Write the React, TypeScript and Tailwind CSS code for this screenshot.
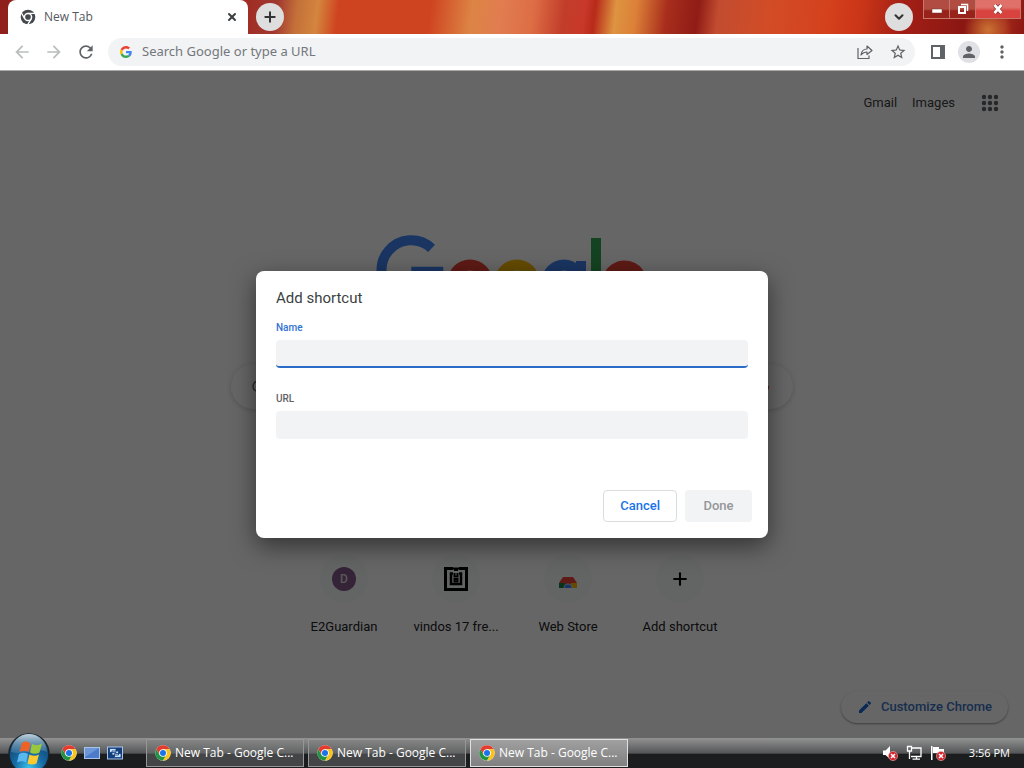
import { ChevronDown, Plus, Search, X } from "lucide-react";
import { MdArrowBack, MdArrowForward, MdEdit, MdMoreVert, MdPerson, MdRefresh, MdStarBorder } from "react-icons/md";

const taskWindows = [
  { title: "New Tab - Google C...", active: false },
  { title: "New Tab - Google C...", active: false },
  { title: "New Tab - Google C...", active: true },
];

function ChromeIcon({ className }: { className: string }) {
  return (
    <svg viewBox="0 0 48 48" className={className} aria-hidden="true">
      <circle cx="24" cy="24" r="23" fill="#fff" />
      <path d="M4.080 12.500A23 23 0 0 1 43.920 12.500H24L14 29.750Z" fill="#e33b2e" />
      <path d="M4.080 12.500A23 23 0 0 0 24 47L34 29.750H14Z" fill="#229342" />
      <path d="M43.920 12.500A23 23 0 0 1 24 47L34 29.750 24 12.500Z" fill="#fcc31e" />
      <circle cx="24" cy="24" r="11.500" fill="#fff" />
      <circle cx="24" cy="24" r="9" fill="#1a73e8" />
    </svg>
  );
}

function ChromeMono({ className }: { className: string }) {
  return (
    <svg viewBox="0 0 48 48" className={className} aria-hidden="true">
      <circle cx="24" cy="24" r="22" fill="#45494d" />
      <path d="M24 13H46M14.500 29.500 3.500 10.500M33.500 29.500 22.500 48.500" stroke="#fff" strokeWidth="4" />
      <circle cx="24" cy="24" r="13" fill="#fff" />
      <circle cx="24" cy="24" r="8.500" fill="#45494d" />
    </svg>
  );
}

function GoogleMark({ className }: { className: string }) {
  return (
    <svg viewBox="0 0 48 48" className={className} aria-hidden="true">
      <path fill="#ea4335" d="M24 9.500c3.540 0 6.710 1.220 9.210 3.600l6.850-6.850C35.900 2.380 30.470 0 24 0 14.620 0 6.510 5.380 2.560 13.220l7.980 6.190C12.430 13.720 17.740 9.500 24 9.500z" />
      <path fill="#4285f4" d="M46.980 24.550c0-1.570-.15-3.090-.38-4.550H24v9.020h12.940c-.58 2.960-2.260 5.480-4.780 7.180l7.730 6c4.510-4.180 7.090-10.360 7.090-17.650z" />
      <path fill="#fbbc05" d="M10.530 28.590c-.48-1.450-.76-2.990-.76-4.590s.27-3.140.76-4.590l-7.980-6.190C.92 16.460 0 20.120 0 24s.92 7.540 2.560 10.780l7.970-6.190z" />
      <path fill="#34a853" d="M24 48c6.480 0 11.930-2.130 15.890-5.810l-7.730-6c-2.150 1.450-4.920 2.300-8.160 2.300-6.260 0-11.570-4.220-13.470-9.910l-7.980 6.190C6.510 42.620 14.620 48 24 48z" />
    </svg>
  );
}

function GoogleLogo() {
  return (
    <svg viewBox="0 0 272 92" className="h-[92px] w-[272px]" role="img" aria-label="Google" fill="none" strokeWidth="10">
      <path d="M55.600 13.300A29.700 29.700 0 1 0 60.100 51.200Q62.500 45 62.300 36.700H35.300" stroke="#4285f4" />
      <circle cx="94" cy="47" r="17" stroke="#ea4335" strokeWidth="11" />
      <circle cx="141" cy="47" r="17" stroke="#fbbc05" strokeWidth="11" />
      <path d="M205 26V66a17 17 0 0 1-33 6" stroke="#4285f4" />
      <circle cx="188" cy="47" r="17" stroke="#4285f4" strokeWidth="11" />
      <path d="M220 3V68" stroke="#34a853" />
      <path d="M233 54 264 41A17 17 0 1 0 263 57" stroke="#ea4335" strokeWidth="11" />
    </svg>
  );
}

function TabStrip() {
  return (
    <header className="flex h-[34px] bg-[radial-gradient(circle_at_988px_30px,#d8883acc_0,transparent_24px),linear-gradient(97deg,#8e1f1a_0%,#a02c24_24%,#a0382f_27%,#c4703a_29%,#d4853e_31%,#cf4420_33%,#cf4420_42%,#dc8445_46%,#e17c50_49%,#dd6d45_52%,#c23d2a_55%,#c9382a_57%,#b82a1a_58%,#dd9440_60%,#dc8038_62%,#a82d1c_65%,#8f1c16_68%,#c24c30_70%,#d24c26_75%,#d4401c_81%,#c93517_84%,#a21f16_88%,#8b1712_94%,#a2281a_98%,#8b1712_100%)]">
      <div className="ml-2 flex w-60 items-center rounded-t-lg bg-white pr-2 pl-3">
        <ChromeMono className="size-4" />
        <span className="ml-2 flex-1 font-['Open_Sans',sans-serif] text-xs text-[#54585c]">New Tab</span>
        <button aria-label="Close tab" className="grid size-4 place-items-center text-[#3c4043]">
          <X className="size-3" strokeWidth={4} />
        </button>
      </div>
      <button aria-label="New tab" className="mt-[3px] ml-2 grid size-7 place-items-center rounded-full bg-[#dedede] text-[#333]">
        <Plus className="size-4" strokeWidth={3} />
      </button>
      <div className="flex-1" />
      <button aria-label="Search tabs" className="mt-[3px] mr-2.5 grid size-7 place-items-center rounded-full bg-[#dedede] text-[#333]">
        <ChevronDown className="size-3.5" strokeWidth={3.5} />
      </button>
      <div className="mr-[3px] flex h-[19px] gap-px border border-t-0 border-[#c9776a] bg-[#c9776a]">
        <button aria-label="Minimize" className="grid w-[25px] place-items-center bg-linear-to-b from-[#b04c42] from-50% to-[#98231b] to-60%">
          <svg viewBox="0 0 12 10" className="h-2.5 w-3">
            <rect x="1" y="5" width="10" height="4" fill="#fff" stroke="#6c3a35" strokeWidth=".5" />
          </svg>
        </button>
        <button aria-label="Restore" className="grid w-[25px] place-items-center bg-linear-to-b from-[#b04c42] from-50% to-[#98231b] to-60%">
          <svg viewBox="0 0 12 12" className="size-3" fill="none" stroke="#fff">
            <path d="M4 1.500H10.500V8" strokeWidth="1.500" />
            <rect x="2" y="4" width="6" height="6" strokeWidth="2" />
          </svg>
        </button>
        <button aria-label="Close" className="grid w-11 place-items-center bg-linear-to-b from-[#e0716a] from-40% to-[#d8433f] to-60%">
          <svg viewBox="0 0 12 10" className="h-2.5 w-3" fill="none">
            <path d="M2.500 1 9.500 9M9.500 1 2.500 9" stroke="#7b2520" strokeWidth="4" />
            <path d="M2.500 1 9.500 9M9.500 1 2.500 9" stroke="#fff" strokeWidth="2.800" />
          </svg>
        </button>
      </div>
    </header>
  );
}

function Toolbar() {
  return (
    <nav className="flex h-[37px] items-center border-b border-[#aaa] bg-white px-3 text-[#5f6368]">
      <button aria-label="Back" className="text-[#babcbe]">
        <MdArrowBack className="size-5" />
      </button>
      <button aria-label="Forward" className="ml-3 text-[#babcbe]">
        <MdArrowForward className="size-5" />
      </button>
      <button aria-label="Reload" className="ml-3">
        <MdRefresh className="size-5" />
      </button>
      <div className="ml-3 flex h-7 flex-1 items-center rounded-full bg-[#f1f3f4] pr-2 pl-3">
        <GoogleMark className="size-3" />
        <input
          aria-label="Address bar"
          placeholder="Search Google or type a URL"
          className="ml-2.5 flex-1 bg-transparent font-['Noto_Sans',sans-serif] text-[13px] outline-none placeholder:text-[#74777b]"
        />
        <button aria-label="Share" className="mr-4">
          <svg viewBox="0 0 16 16" className="size-4" fill="none" stroke="currentColor" strokeWidth="1.200">
            <path d="M1 4V14.500H12V11.500" />
            <path d="M4 11C4.500 7 7 5 10 5V2L15 6.500 10 10.500V8C7.500 8 5.500 9 4 11Z" strokeLinejoin="round" />
          </svg>
        </button>
        <button aria-label="Bookmark">
          <MdStarBorder className="size-[18px]" />
        </button>
      </div>
      <button aria-label="Side panel" className="ml-[15px]">
        <svg viewBox="0 0 16 16" className="size-4">
          <path d="M1 1H15V15H1ZM3 3V13H10V3Z" fill="currentColor" fillRule="evenodd" />
        </svg>
      </button>
      <button aria-label="Profile" className="ml-3 grid size-[22px] place-items-center rounded-full bg-[#dfe1e5]">
        <MdPerson className="size-[18px]" />
      </button>
      <button aria-label="Menu" className="ml-3">
        <MdMoreVert className="size-5" />
      </button>
    </nav>
  );
}

function Shortcuts() {
  const items = [
    {
      label: "E2Guardian",
      icon: <span className="grid size-6 place-items-center rounded-full bg-[#855a8a] text-xs font-medium text-[#ddd]">D</span>,
    },
    {
      label: "vindos 17 fre...",
      icon: (
        <svg viewBox="0 0 24 24" className="size-6" fill="none" stroke="#000" strokeWidth="3">
          <path d="M9 1.500H1.500V22.500H22.500V1.500H15" />
          <path d="M9 6.500H7V17H17V6.500H15" strokeWidth="2.500" />
          <path d="M9 1.500H11V4M15 1.500H13V4M10.500 6V9.500H13.500V6M10.500 12H13.500V14.500H10.500Z" strokeWidth="2" />
        </svg>
      ),
    },
    {
      label: "Web Store",
      icon: (
        <svg viewBox="0 0 24 24" className="size-6">
          <path d="M3 21V16L7 10H17L21 16V21Z" fill="#ea4335" />
          <path d="M3 16H9V21H3Z" fill="#188038" />
          <path d="M15 16H21V21H15Z" fill="#fbbc05" />
          <path d="M7.500 21A4.500 4.500 0 0 1 16.500 21Z" fill="#b9cdf5" />
          <path d="M8.500 21A3.500 3.500 0 0 1 15.500 21Z" fill="#4285f4" />
        </svg>
      ),
    },
    { label: "Add shortcut", icon: <Plus className="size-5 text-black" strokeWidth={2.5} /> },
  ];

  return (
    <div className="mt-[146px] flex">
      {items.map((item) => (
        <a key={item.label} href="#" className="flex w-28 flex-col items-center gap-4 text-[13px] leading-4 text-[#202124]">
          <span className="grid size-12 place-items-center rounded-full bg-[#f7f9f9]">{item.icon}</span>
          {item.label}
        </a>
      ))}
    </div>
  );
}

function NewTabPage() {
  return (
    <div className="flex flex-1 flex-col items-center bg-white">
      <div className="flex w-full items-center justify-end pt-5 pr-[22px] text-[13px] text-[#3c4043]">
        <a href="#">Gmail</a>
        <a href="#" className="ml-[15px]">Images</a>
        <button aria-label="Google apps" className="ml-[23px]">
          <svg viewBox="0 0 24 24" className="size-6 text-[#5f6368]" fill="none" stroke="currentColor" strokeWidth="4.400" strokeLinecap="round">
            <path d="M6 6h0M12 6h0M18 6h0M6 12h0M12 12h0M18 12h0M6 18h0M12 18h0M18 18h0" />
          </svg>
        </button>
      </div>
      <div className="mt-[120px]">
        <GoogleLogo />
      </div>
      <div className="mt-[37px] flex h-[45px] w-full max-w-[562px] items-center rounded-full px-5 shadow-[0_1px_5px_rgba(32,33,36,0.2)]">
        <Search className="size-4 text-[#5f6368]" />
        <input aria-label="Search" className="min-w-0 flex-1 outline-none" />
        <svg viewBox="0 0 24 24" className="size-6" fill="none" strokeWidth="2.500">
          <rect x="9" y="3" width="6" height="11" rx="3" stroke="#4285f4" />
          <path d="M5 11a7 7 0 0 0 14 0" stroke="#ea4335" />
          <path d="M12 18V22" stroke="#34a853" />
        </svg>
      </div>
      <Shortcuts />
      <button className="mt-auto mr-4 mb-[15px] flex h-8 items-center gap-2 self-end rounded-full px-4 text-[13px] font-medium text-[#3d74c4] shadow-[0_1px_2px_rgba(0,0,0,0.4)]">
        <MdEdit className="size-4 text-[#1a67d2]" />
        Customize Chrome
      </button>
    </div>
  );
}

function AddShortcutDialog() {
  return (
    <div className="absolute inset-0 grid place-items-center bg-black/60">
      <form role="dialog" aria-labelledby="dialog-title" className="w-1/2 rounded-lg bg-white px-5 pt-[17px] pb-4 shadow-[0_8px_24px_rgba(0,0,0,0.5)]">
        <h1 id="dialog-title" className="text-[15px] leading-5 text-[#3c3f43]">Add shortcut</h1>
        <label htmlFor="name" className="mt-3 block text-[10px] leading-4 font-medium text-[#2f72d4]">Name</label>
        <input id="name" className="mt-1 block h-7 w-full rounded border-b-2 border-[#2b6cc8] bg-[#f1f3f4] px-2 text-xs outline-none" />
        <label htmlFor="url" className="mt-[23px] block text-[10px] leading-4 font-medium text-[#5f6368]">URL</label>
        <input id="url" className="mt-1 block h-7 w-full rounded bg-[#f1f3f4] px-2 text-xs outline-none" />
        <div className="-mr-1 mt-[51px] flex justify-end gap-2 text-[13px] font-medium">
          <button type="button" className="h-8 rounded border border-[#dadce0] px-4 text-[#1a73e8]">Cancel</button>
          <button type="button" disabled className="h-8 w-[67px] rounded bg-[#f1f3f4] text-[#959799]">Done</button>
        </div>
      </form>
    </div>
  );
}

function StartButton() {
  return (
    <button aria-label="Start" className="absolute -top-[5px] left-2 size-[42px]">
      <svg viewBox="0 0 42 42">
        <defs>
          <radialGradient id="orb" cx=".5" cy=".85" r=".8">
            <stop offset="0" stopColor="#38c4ee" />
            <stop offset=".45" stopColor="#176ba5" />
            <stop offset="1" stopColor="#123b61" />
          </radialGradient>
          <linearGradient id="gloss" x2="0" y2="1">
            <stop offset="0" stopColor="#d2e5ee" stopOpacity=".9" />
            <stop offset="1" stopColor="#7fa9c3" stopOpacity=".25" />
          </linearGradient>
        </defs>
        <circle cx="21" cy="21" r="20" fill="url(#orb)" stroke="#18242d" strokeWidth="1.500" />
        <path d="M3 19A18 18 0 0 1 39 19C29 14 14 23 3 19Z" fill="url(#gloss)" />
        <g transform="translate(2 1)">
          <path d="M12 9Q16 6 20.500 9.500L18.500 18Q14.500 15.500 9.500 18Z" fill="#ef6226" />
          <path d="M22 10Q27 12.500 32 9.500L29.500 18.500Q25 21 20 18.500Z" fill="#9ac83c" />
          <path d="M9 20Q14 17.500 18 20L16 28.500Q12 26 7 28.500Z" fill="#58b8ef" />
          <path d="M19.500 20.500Q24.500 23 29 20.500L26.500 29.500Q22 31.500 17.500 29.500Z" fill="#fdc92e" />
        </g>
      </svg>
    </button>
  );
}

function BlockedBadge() {
  return (
    <g>
      <circle cx="11" cy="11" r="4.600" fill="#cf2630" stroke="#edb0b0" strokeWidth=".6" />
      <path d="M9 9l4 4m0-4l-4 4" stroke="#fff" strokeWidth="1.500" />
    </g>
  );
}

function Taskbar() {
  return (
    <footer className="relative flex h-[30px] items-center bg-linear-to-b from-[#929292] from-0% via-[#555758] via-50% to-[#1b1d1e] to-55% pr-3.5 pl-[61px] font-['Open_Sans',sans-serif] text-xs text-white">
      <StartButton />
      <button aria-label="Google Chrome">
        <ChromeIcon className="size-4" />
      </button>
      <button aria-label="Show desktop" className="ml-[7px]">
        <svg viewBox="0 0 16 16" className="size-4">
          <rect x=".5" y="2.500" width="15" height="11" fill="#4c7cc9" stroke="#a9c4e8" />
          <path d="M1 3H15L1 12Z" fill="#6d97d8" />
        </svg>
      </button>
      <button aria-label="Switch windows" className="ml-[7px]">
        <svg viewBox="0 0 16 16" className="size-4">
          <rect x=".5" y="2" width="15" height="12" fill="#123f7c" stroke="#a9c4e8" />
          <path d="M2.500 3.500H9V7.500H2.500ZM5 6H11.500V10H5ZM7.500 8.500H14V12.500H7.500Z" fill="#c9e0fa" stroke="#123f7c" strokeWidth=".8" />
        </svg>
      </button>
      <div className="ml-[23px] flex min-w-0 flex-1 gap-1">
        {taskWindows.map((win, index) => (
          <button
            key={index}
            className={`flex h-7 w-[158px] items-center gap-1 border pl-2 whitespace-nowrap ${
              win.active
                ? "border-[#e0e0e0] bg-linear-to-b from-[#a0a0a0] to-[#808080]"
                : "border-[#969696] bg-linear-to-b from-[#858585] via-[#636565] via-50% to-[#434546] to-55%"
            }`}
          >
            <ChromeIcon className="size-4 shrink-0" />
            {win.title}
          </button>
        ))}
      </div>
      <div className="flex items-center gap-2">
        <svg viewBox="0 0 16 16" className="size-4" role="img" aria-label="Muted">
          <path d="M1 5.500H3.500L8 1V14L3.500 10H1Z" fill="#fff" />
          <BlockedBadge />
        </svg>
        <svg viewBox="0 0 16 16" className="size-4" role="img" aria-label="Network" fill="none" stroke="#fff" strokeWidth="1.300">
          <path d="M6 3H15V11.500H5M10.500 11.500V14M6.500 14.200H14" />
          <path d="M1.500 1.500H5.500V6H1.500ZM3.500 6V14" />
        </svg>
        <svg viewBox="0 0 16 16" className="size-4" role="img" aria-label="Action center">
          <path d="M1 1H2.500V15H1ZM3 2H9V4H14V9H8V8H3Z" fill="#fff" />
          <BlockedBadge />
        </svg>
      </div>
      <span className="ml-[23px] text-[11px]">3:56 PM</span>
    </footer>
  );
}

export default function App() {
  return (
    <div className="flex min-h-screen flex-col overflow-hidden font-[Roboto,sans-serif]">
      <TabStrip />
      <Toolbar />
      <main className="relative flex flex-1 flex-col">
        <NewTabPage />
        <AddShortcutDialog />
      </main>
      <Taskbar />
    </div>
  );
}
